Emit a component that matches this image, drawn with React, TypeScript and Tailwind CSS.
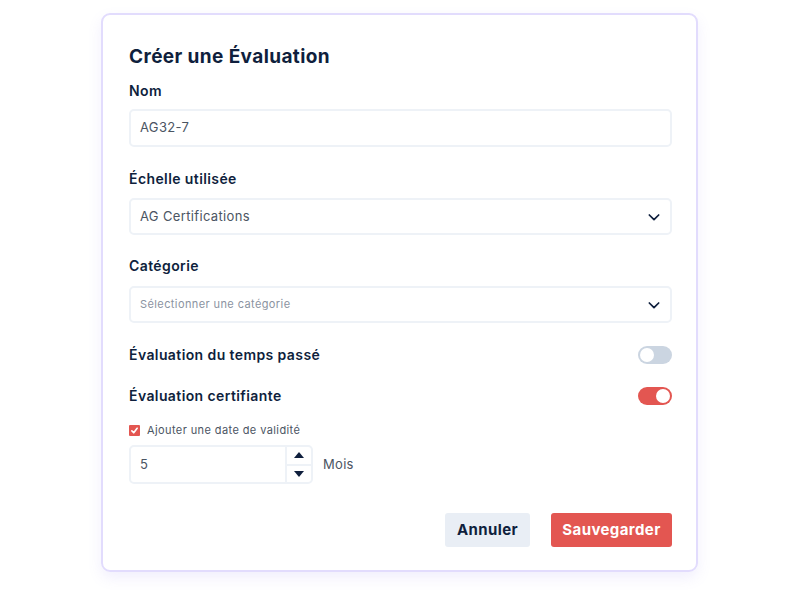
import { useState } from 'react';

function Chevron() {
  return (
    <svg width="16" height="16" viewBox="0 0 24 24" fill="none" stroke="#0f1f3d" strokeWidth="2.6" strokeLinecap="round" strokeLinejoin="round">
      <path d="M5 9l7 7 7-7" />
    </svg>
  );
}

function Toggle({ on }: { on: boolean }) {
  return (
    <div className={`w-[34px] h-[18px] rounded-full p-[2px] flex items-center ${on ? 'bg-[#e35651] justify-end' : 'bg-[#cbd5e1] justify-start'}`}>
      <div className="w-[14px] h-[14px] rounded-full bg-white" />
    </div>
  );
}

export default function App() {
  const [months] = useState('5');

  return (
    <div className="w-[801px] h-[601px] bg-white pl-[101px] pt-[13px]" style={{ fontFamily: 'Inter, "Noto Sans", sans-serif' }}>
      <div className="w-[597px] h-[559px] border-2 border-[#e2dcfd] rounded-[9px] shadow-[0_6px_14px_rgba(139,120,240,0.12)] pl-[26px] pr-[24px] pt-[30px] flex flex-col">
        <h1 className="text-[19px] font-bold text-[#0f1f3d] leading-[24px] tracking-[0.4px]">Créer une Évaluation</h1>

        {/* Nom */}
        <label className="mt-[12px] text-[14px] font-semibold text-[#0f1f3d] leading-[20px] tracking-[0.4px]">Nom</label>
        <div className="mt-[8px] h-[38px] border-2 border-[#eef2f7] rounded-[5px] flex items-center px-[9px] text-[13px] text-[#4b5563] tracking-[0.35px]">
          AG32-7
        </div>

        {/* Echelle */}
        <label className="mt-[22px] text-[14px] font-semibold text-[#0f1f3d] leading-[20px] tracking-[0.4px]">Échelle utilisée</label>
        <div className="mt-[9px] h-[37px] border-2 border-[#eef2f7] rounded-[5px] flex items-center justify-between pl-[9px] pr-[8px] text-[13px] text-[#4b5563] tracking-[0.35px]">
          <span>AG Certifications</span>
          <Chevron />
        </div>

        {/* Catégorie */}
        <label className="mt-[21px] text-[14px] font-semibold text-[#0f1f3d] leading-[20px] tracking-[0.4px]">Catégorie</label>
        <div className="mt-[10px] h-[37px] border-2 border-[#eef2f7] rounded-[5px] flex items-center justify-between pl-[9px] pr-[8px] text-[11px] text-[#8b93a1] tracking-[0.4px]">
          <span>Sélectionner une catégorie</span>
          <Chevron />
        </div>

        {/* Toggles */}
        <div className="mt-[22px] flex items-center justify-between">
          <span className="text-[14px] font-semibold text-[#0f1f3d] leading-[20px] tracking-[0.4px]">Évaluation du temps passé</span>
          <Toggle on={false} />
        </div>
        <div className="mt-[21px] flex items-center justify-between">
          <span className="text-[14px] font-semibold text-[#0f1f3d] leading-[20px] tracking-[0.4px]">Évaluation certifiante</span>
          <Toggle on={true} />
        </div>

        {/* Checkbox */}
        <div className="mt-[17px] flex items-center gap-[7px]">
          <div className="w-[11px] h-[11px] bg-[#e35651] rounded-[1px] flex items-center justify-center">
            <svg width="9" height="9" viewBox="0 0 12 12" fill="none" stroke="white" strokeWidth="2.2" strokeLinecap="round" strokeLinejoin="round">
              <path d="M2.5 6.5l2.5 2.5 4.5-6" />
            </svg>
          </div>
          <span className="text-[11px] text-[#4b5563] leading-[14px] tracking-[0.4px]">Ajouter une date de validité</span>
        </div>

        {/* Number */}
        <div className="mt-[8px] flex items-center gap-[10px]">
          <div className="w-[184px] h-[39px] border-2 border-[#eef2f7] rounded-[5px] flex">
            <div className="flex-1 flex items-center px-[9px] text-[13px] text-[#4b5563]">{months}</div>
            <div className="w-[26px] border-l-2 border-[#eef2f7] flex flex-col">
              <div className="flex-1 flex items-center justify-center border-b-2 border-[#eef2f7]">
                <svg width="10" height="6" viewBox="0 0 10 6"><path d="M0 6L5 0l5 6z" fill="#0f1f3d" /></svg>
              </div>
              <div className="flex-1 flex items-center justify-center">
                <svg width="10" height="6" viewBox="0 0 10 6"><path d="M0 0l5 6 5-6z" fill="#0f1f3d" /></svg>
              </div>
            </div>
          </div>
          <span className="text-[13px] text-[#4b5563] tracking-[0.3px]">Mois</span>
        </div>

        {/* Actions */}
        <div className="mt-[29px] flex justify-end gap-[21px]">
          <button className="w-[85px] h-[34px] rounded-[3px] bg-[#e9eef5] text-[15px] font-bold text-[#0f1f3d] tracking-[0.4px]">Annuler</button>
          <button className="w-[121px] h-[34px] rounded-[3px] bg-[#e35651] text-[15px] font-bold text-white tracking-[0.4px]">Sauvegarder</button>
        </div>
      </div>
    </div>
  );
}
